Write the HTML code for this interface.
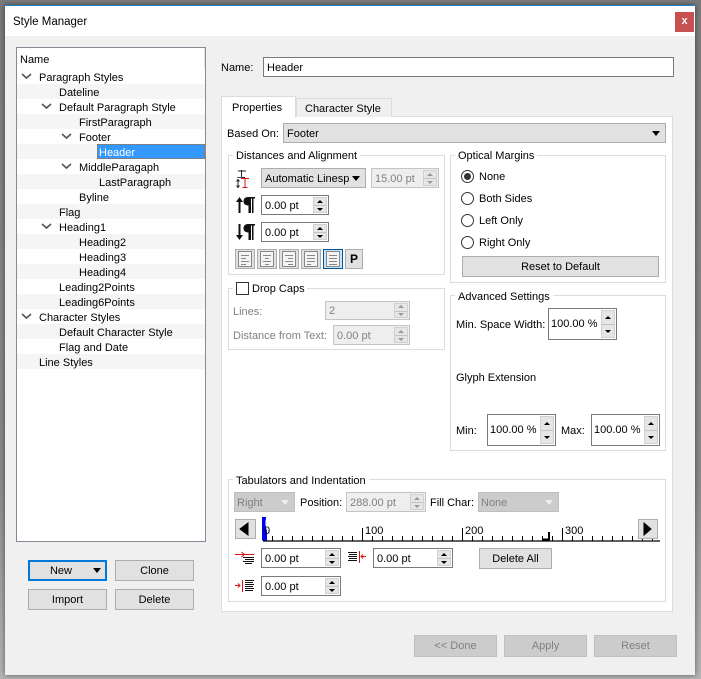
<!DOCTYPE html>
<html><head><meta charset="utf-8"><title>Style Manager</title>
<style>
*{box-sizing:border-box}
html,body{margin:0;padding:0;width:701px;height:679px;overflow:hidden;background:#8c8c8c;font:11px/14px "Liberation Sans",sans-serif;color:#000}
#bg{position:absolute;left:0;top:0;width:701px;height:679px;background:linear-gradient(#7a7a7a,#8a8a8a 70%,#b4b4b4)}
#win{position:absolute;left:5px;top:5px;width:690px;height:670px;background:#f0f0f0;border-top:1px solid #1b7fc8;box-shadow:0 0 5px rgba(0,0,0,.5)}
#title{position:absolute;left:5px;top:6px;width:690px;height:30px;background:#fff}
.a{position:absolute}
.t{position:absolute;white-space:nowrap;line-height:14px;margin-top:1px}
.g{color:#808080}
.row{position:absolute;left:17px;width:188px;height:15px;background:#f5f5f5}
.box{position:absolute;border:1px solid #dcdcdc}
.leg{position:absolute;background:#fff;padding:0 3px;line-height:14px;white-space:nowrap;margin-top:1px}
.btn{position:absolute;background:#e1e1e1;border:1px solid #adadad;text-align:center;white-space:nowrap;padding-top:1px}
.dis{background:#ccc;border-color:#bfbfbf;color:#808080}
.inp{position:absolute;background:#fff;border:1px solid #7a7a7a;padding-left:3px;padding-top:1px;white-space:nowrap;line-height:18px}
.inp.d{background:#eee;border-color:#c4c4c4;color:#808080}
.sp{position:absolute;right:1px;top:1px;bottom:1px;width:14px;background:#e6e6e6;border:1px solid #d0d0d0}
.sp:before,.sp:after{content:"";position:absolute;left:3px;border-left:3px solid transparent;border-right:3px solid transparent}
.sp:before{top:calc(25% - 2px);border-bottom:3px solid #000}
.sp:after{bottom:calc(25% - 2px);border-top:3px solid #000}
.sp i{position:absolute;left:0;right:0;top:50%;border-top:1px solid #c4c4c4}
.d .sp:before{border-bottom-color:#999}.d .sp:after{border-top-color:#999}
.tri{position:absolute;border-left:4.5px solid transparent;border-right:4.5px solid transparent;border-top:5px solid #000}
.rad{position:absolute;width:13px;height:13px;border:1px solid #333;border-radius:50%;background:#fff}
.al{position:absolute;top:249px;width:20px;height:20px;background:#e1e1e1;border:1px solid #adadad}
svg{position:absolute;overflow:visible}
.lines{left:2px;top:1px}
</style></head><body>
<div id="bg"></div>
<div id="win"></div>
<div id="title"></div>
<div class="t" style="left:13px;top:14px;font-size:11.5px">Style Manager</div>
<div class="a" style="left:675px;top:12px;width:19px;height:20px;background:#c75050;color:#fff;font-size:11px;font-weight:bold;text-align:center;line-height:19px">x</div>

<!-- tree -->
<div class="a" style="left:16px;top:47px;width:190px;height:495px;background:#fff;border:1px solid #8a8a96"></div>
<div class="a" style="left:204px;top:48px;width:1px;height:20px;background:#e4e4e4"></div>
<div class="row" style="top:84px"></div><div class="row" style="top:114px"></div><div class="row" style="top:144px"></div><div class="row" style="top:174px"></div><div class="row" style="top:204px"></div><div class="row" style="top:234px"></div><div class="row" style="top:264px"></div><div class="row" style="top:294px"></div><div class="row" style="top:324px"></div><div class="row" style="top:354px"></div>
<div class="a" style="left:97px;top:144px;width:108px;height:15px;background:#3399ff;border:1px dotted #c4651c"></div>
<div class="t" style="left:20px;top:52px">Name</div>
<div class="t" style="left:39px;top:70px">Paragraph Styles</div>
<div class="t" style="left:59px;top:85px">Dateline</div>
<div class="t" style="left:59px;top:100px">Default Paragraph Style</div>
<div class="t" style="left:79px;top:115px">FirstParagraph</div>
<div class="t" style="left:79px;top:130px">Footer</div>
<div class="t" style="left:99px;top:145px;color:#fff">Header</div>
<div class="t" style="left:79px;top:160px">MiddleParagaph</div>
<div class="t" style="left:99px;top:175px">LastParagraph</div>
<div class="t" style="left:79px;top:190px">Byline</div>
<div class="t" style="left:59px;top:205px">Flag</div>
<div class="t" style="left:59px;top:220px">Heading1</div>
<div class="t" style="left:79px;top:235px">Heading2</div>
<div class="t" style="left:79px;top:250px">Heading3</div>
<div class="t" style="left:79px;top:265px">Heading4</div>
<div class="t" style="left:59px;top:280px">Leading2Points</div>
<div class="t" style="left:59px;top:295px">Leading6Points</div>
<div class="t" style="left:39px;top:310px">Character Styles</div>
<div class="t" style="left:59px;top:325px">Default Character Style</div>
<div class="t" style="left:59px;top:340px">Flag and Date</div>
<div class="t" style="left:39px;top:355px">Line Styles</div>
<svg style="left:0;top:0" width="100" height="330" fill="none" stroke="#555" stroke-width="1.6">
<path d="M22 74l4.500 4 4.500-4M42 104l4.500 4 4.500-4M62 134l4.500 4 4.500-4M62 164l4.500 4 4.500-4M42 224l4.500 4 4.500-4M22 314l4.500 4 4.500-4"/></svg>

<!-- left buttons -->
<div class="btn" style="left:28px;top:560px;width:79px;height:21px;border:2px solid #0078d7;line-height:17px;padding-top:0;padding-right:13px"><span style="position:relative;top:1px">New</span></div>
<div class="tri" style="left:93px;top:568px;border-top-color:#000"></div>
<div class="btn" style="left:115px;top:560px;width:79px;height:21px;line-height:18px">Clone</div>
<div class="btn" style="left:28px;top:589px;width:79px;height:21px;line-height:18px">Import</div>
<div class="btn" style="left:115px;top:589px;width:79px;height:21px;line-height:18px">Delete</div>

<!-- name -->
<div class="t" style="left:221px;top:60px">Name:</div>
<div class="inp" style="left:263px;top:57px;width:411px;height:20px">Header</div>

<!-- tabs -->
<div class="a" style="left:221px;top:116px;width:452px;height:496px;background:#fff;border:1px solid #dcdcdc"></div>
<div class="a" style="left:296px;top:98px;width:96px;height:19px;background:#f0f0f0;border:1px solid #dcdcdc;border-bottom:0"></div>
<div class="a" style="left:221px;top:96px;width:75px;height:22px;background:#fff;border:1px solid #dcdcdc;border-bottom:0"></div>
<div class="t" style="left:232px;top:100px">Properties</div>
<div class="t" style="left:305px;top:101px">Character Style</div>

<div class="t" style="left:227px;top:126px">Based On:</div>
<div class="btn" style="left:283px;top:123px;width:383px;height:20px;text-align:left;padding-left:3px;line-height:18px">Footer</div>
<div class="tri" style="left:652px;top:131px"></div>

<!-- Distances -->
<div class="box" style="left:228px;top:155px;width:217px;height:120px"></div>
<div class="leg" style="left:233px;top:148px">Distances and Alignment</div>
<svg style="left:236px;top:168px" width="20" height="20" fill="none" stroke="#222" stroke-width="1">
<path d="M2 3h8M5.500 2v7M3 9.500h6"/><path d="M1 9.500h5" stroke="#555"/><path d="M2 12v7M.5 13.500L2 11.500l1.500 2M.5 17.500L2 19.500l1.500-2"/><path d="M5 10.500h8M9 10.500v9M6.500 19.500h5" stroke="#e01010"/></svg>
<div class="btn" style="left:261px;top:168px;width:105px;height:20px;text-align:left;padding-left:3px;line-height:18px">Automatic Linesp</div>
<div class="tri" style="left:352px;top:176px"></div>
<div class="inp d" style="left:371px;top:168px;width:68px;height:20px">15.00 pt<span class="sp"><i></i></span></div>

<svg style="left:236px;top:196px" width="20" height="18"><path d="M3.500 17V4" stroke="#111" stroke-width="2"/><path d="M0 6L3.500 1 7 6z" fill="#111"/><path d="M12 1h7v1.500h-1.500V17H16V2.500h-1V17h-2.500V9.500C9 9.500 7.500 7.800 7.500 5.300S9 1 12 1z" fill="#111"/></svg>
<div class="inp" style="left:261px;top:195px;width:68px;height:20px">0.00 pt<span class="sp"><i></i></span></div>
<svg style="left:236px;top:223px" width="20" height="18"><path d="M3.500 1v13" stroke="#111" stroke-width="2"/><path d="M0 12L3.500 17 7 12z" fill="#111"/><path d="M12 1h7v1.500h-1.500V17H16V2.500h-1V17h-2.500V9.500C9 9.500 7.500 7.800 7.500 5.300S9 1 12 1z" fill="#111"/></svg>
<div class="inp" style="left:261px;top:222px;width:68px;height:20px">0.00 pt<span class="sp"><i></i></span></div>

<div class="al" style="left:235px"><svg class="lines" width="14" height="15" fill="#f4f4f4" stroke="#888"><rect x=".5" y=".5" width="13" height="15"/><path d="M3 4.500h8M3 7.500h5M3 10.500h8M3 13.500h5"/></svg></div>
<div class="al" style="left:257px"><svg class="lines" width="14" height="15" fill="#f4f4f4" stroke="#888"><rect x=".5" y=".5" width="13" height="15"/><path d="M3 4.500h8M5 7.500h4M3 10.500h8M5 13.500h4"/></svg></div>
<div class="al" style="left:279px"><svg class="lines" width="14" height="15" fill="#f4f4f4" stroke="#888"><rect x=".5" y=".5" width="13" height="15"/><path d="M3 4.500h8M6 7.500h5M3 10.500h8M6 13.500h5"/></svg></div>
<div class="al" style="left:301px"><svg class="lines" width="14" height="15" fill="#f4f4f4" stroke="#888"><rect x=".5" y=".5" width="13" height="15"/><path d="M3 4.500h8M3 7.500h8M3 10.500h8M3 13.500h4"/></svg></div>
<div class="al" style="left:323px;background:#cce4f7;border-color:#005499"><svg class="lines" width="14" height="15" fill="#f4f4f4" stroke="#888"><rect x=".5" y=".5" width="13" height="15"/><path d="M3 4.500h8M3 7.500h8M3 10.500h8M3 13.500h8"/></svg></div>
<div class="al" style="left:345px;width:18px;font-weight:bold;font-size:12px;text-align:center;line-height:18px">P</div>

<!-- Optical -->
<div class="box" style="left:450px;top:155px;width:216px;height:128px"></div>
<div class="leg" style="left:455px;top:148px">Optical Margins</div>
<div class="rad" style="left:461px;top:170px"></div><div class="a" style="left:464px;top:173px;width:7px;height:7px;border-radius:50%;background:#333"></div>
<div class="rad" style="left:461px;top:192px"></div>
<div class="rad" style="left:461px;top:214px"></div>
<div class="rad" style="left:461px;top:236px"></div>
<div class="t" style="left:479px;top:169px">None</div>
<div class="t" style="left:479px;top:191px">Both Sides</div>
<div class="t" style="left:479px;top:213px">Left Only</div>
<div class="t" style="left:479px;top:235px">Right Only</div>
<div class="btn" style="left:462px;top:256px;width:197px;height:21px;line-height:18px">Reset to Default</div>

<!-- Drop caps -->
<div class="box" style="left:228px;top:288px;width:217px;height:62px"></div>
<div class="leg" style="left:233px;top:280px;width:74px;height:14px"></div>
<div class="a" style="left:236px;top:282px;width:13px;height:13px;background:#fff;border:1px solid #333"></div>
<div class="t" style="left:252px;top:281px">Drop Caps</div>
<div class="t g" style="left:233px;top:304px">Lines:</div>
<div class="inp d" style="left:325px;top:301px;width:85px;height:19px;line-height:17px">2<span class="sp"><i></i></span></div>
<div class="t g" style="left:233px;top:328px">Distance from Text:</div>
<div class="inp d" style="left:333px;top:325px;width:77px;height:20px">0.00 pt<span class="sp"><i></i></span></div>

<!-- Advanced -->
<div class="box" style="left:450px;top:295px;width:216px;height:156px"></div>
<div class="leg" style="left:455px;top:289px">Advanced Settings</div>
<div class="t" style="left:456px;top:317px">Min. Space Width:</div>
<div class="inp" style="left:548px;top:308px;width:69px;height:32px;line-height:29px;padding-left:2px">100.00 %<span class="sp"><i></i></span></div>
<div class="t" style="left:456px;top:370px">Glyph Extension</div>
<div class="t" style="left:456px;top:423px">Min:</div>
<div class="inp" style="left:487px;top:414px;width:69px;height:32px;line-height:29px;padding-left:2px">100.00 %<span class="sp"><i></i></span></div>
<div class="t" style="left:561px;top:423px">Max:</div>
<div class="inp" style="left:591px;top:414px;width:69px;height:32px;line-height:29px;padding-left:2px">100.00 %<span class="sp"><i></i></span></div>

<!-- Tabulators -->
<div class="box" style="left:228px;top:479px;width:438px;height:123px"></div>
<div class="leg" style="left:233px;top:473px">Tabulators and Indentation</div>
<div class="btn dis" style="left:234px;top:492px;width:61px;height:20px;text-align:left;padding-left:2px;line-height:18px">Right</div>
<div class="tri" style="left:281px;top:500px;border-top-color:#eee"></div>
<div class="t" style="left:300px;top:495px">Position:</div>
<div class="inp d" style="left:346px;top:492px;width:80px;height:20px">288.00 pt<span class="sp"><i></i></span></div>
<div class="t" style="left:430px;top:495px">Fill Char:</div>
<div class="btn dis" style="left:478px;top:492px;width:81px;height:20px;text-align:left;padding-left:2px;line-height:18px">None</div>
<div class="tri" style="left:545px;top:500px;border-top-color:#eee"></div>

<div class="btn" style="left:235px;top:519px;width:21px;height:20px"></div>
<svg style="left:235px;top:519px" width="21" height="20"><path d="M5 10l8-6v12z" fill="#000" stroke="#000"/></svg>

<svg style="left:262px;top:516px" width="400" height="27">
<path d="M1 1h3v1.500Q2.500 8 5 15v9.500H0V1z" fill="#0000f0"/>
<path d="M1 25h397" stroke="#000" stroke-width="1.300"/>
<path d="M10 22.500H398" stroke="#000" stroke-width="5" stroke-dasharray="1 9"/>
<path stroke="#000" d="M100.500 12v13M200.500 12v13M300.500 12v13"/>
<path d="M280.500 23.500h7M287 16v8" stroke="#000" stroke-width="2" fill="none"/>
</svg>
<div class="t" style="left:264px;top:523px">0</div>
<div class="t" style="left:365px;top:523px">100</div>
<div class="t" style="left:465px;top:523px">200</div>
<div class="t" style="left:565px;top:523px">300</div>
<div class="btn" style="left:638px;top:519px;width:20px;height:20px"></div>
<svg style="left:638px;top:519px" width="20" height="20"><path d="M6 4l7 6-7 6z" fill="#000" stroke="#000"/></svg>

<svg style="left:235px;top:550px" width="20" height="16" fill="none"><path d="M0 4.500h9M6.500 2L9.500 4.500 6.500 7M10 4.500h9" stroke="#e01010"/><path d="M8 7.500h11M10 9.500h9M8 11.500h11M10 13.500h7" stroke="#111"/></svg>
<div class="inp" style="left:261px;top:548px;width:80px;height:20px">0.00 pt<span class="sp"><i></i></span></div>
<svg style="left:348px;top:551px" width="20" height="14" fill="none"><path d="M0 1.500h9M1 3.500h8M0 5.500h9M1 7.500h8M0 9.500h9" stroke="#111"/><path d="M11.500 0v12M18 5.500h-5M15 3.500L13 5.500 15 7.500" stroke="#e01010"/></svg>
<div class="inp" style="left:373px;top:548px;width:80px;height:20px">0.00 pt<span class="sp"><i></i></span></div>
<div class="btn" style="left:479px;top:548px;width:73px;height:21px;line-height:18px">Delete All</div>
<svg style="left:235px;top:579px" width="20" height="14" fill="none"><path d="M0 6.500h5M3 4.500L5 6.500 3 8.500M7.500 1v12" stroke="#e01010"/><path d="M10 1.500h9M10 3.500h8M10 5.500h9M10 7.500h8M10 9.500h9M10 11.500h8" stroke="#111"/></svg>
<div class="inp" style="left:261px;top:576px;width:80px;height:20px">0.00 pt<span class="sp"><i></i></span></div>

<!-- bottom -->
<div class="btn dis" style="left:414px;top:635px;width:83px;height:22px;line-height:19px">&lt;&lt; Done</div>
<div class="btn dis" style="left:504px;top:635px;width:83px;height:22px;line-height:19px">Apply</div>
<div class="btn dis" style="left:594px;top:635px;width:83px;height:22px;line-height:19px">Reset</div>
</body></html>
